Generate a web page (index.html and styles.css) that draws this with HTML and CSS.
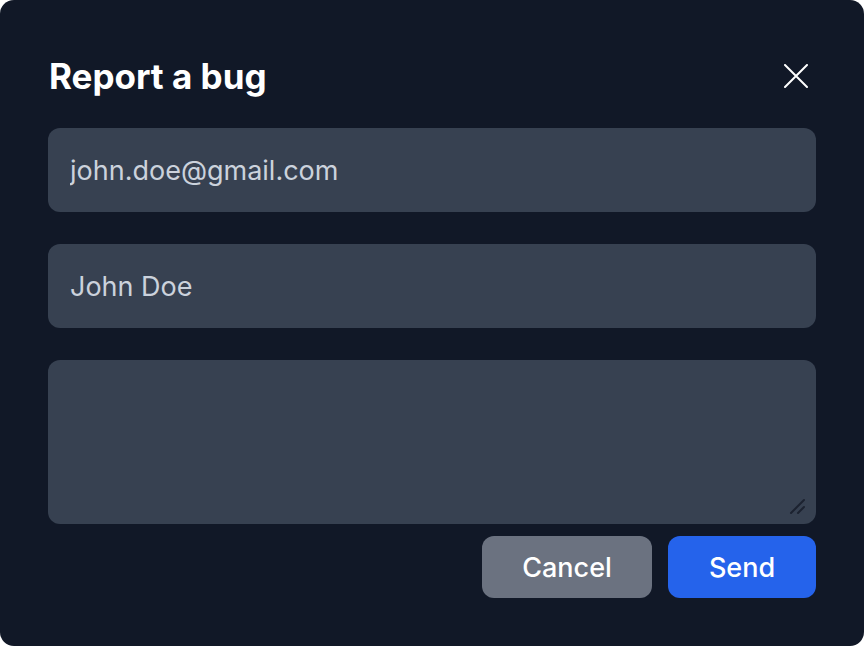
FILE: index.html
```html
<!DOCTYPE html>
<html lang="en">

<head>
    <meta charset="UTF-8">
    <title>Report a bug</title>
    <link rel="stylesheet" href="styles.css">
</head>

<body>
    <div class="dialog">
        <div class="dialog_head">
            <h1 class="dialog_title">Report a bug</h1>
            <button class="dialog_close" type="button">
                <svg width="24" height="24" viewBox="0 0 24 24" fill="none" stroke="#fff" stroke-width="2" stroke-linecap="round">
                    <path d="M1 1L23 23M23 1L1 23"></path>
                </svg>
            </button>
        </div>
        <form class="dialog_form">
            <input class="field" type="text" value="john.doe@gmail.com">
            <input class="field" type="text" value="John Doe">
            <div class="area_wrap">
                <textarea class="field field_area"></textarea>
                <svg class="grip" width="20" height="20" viewBox="0 0 20 20" fill="none" stroke="#1c2230" stroke-width="2" stroke-linecap="round">
                    <path d="M3 17L16 4M10 17L16 11"></path>
                </svg>
            </div>
            <div class="actions">
                <button class="btn btn_cancel" type="button">Cancel</button>
                <button class="btn btn_send" type="button">Send</button>
            </div>
        </form>
    </div>
</body>

</html>
```

FILE: styles.css
```css
html,body,div,h1,form,input,textarea,button {
    padding: 0;
    margin: 0;
    box-sizing: border-box;
}
body {
    background-color: #fff;
    font-family: Inter, "Noto Sans", sans-serif;
}
.dialog {
    width: 864px;
    height: 646px;
    background-color: #111827;
    border-radius: 14px;
    padding: 0 48px 48px;
    display: flex;
    flex-direction: column;
}
.dialog_head {
    height: 128px;
    display: flex;
    align-items: center;
    justify-content: space-between;
    padding-top: 24px;
}
.dialog_title {
    color: #fff;
    font-size: 35px;
    font-weight: 700;
    line-height: 40px;
    margin-left: 1px;
}
.dialog_close {
    width: 24px;
    height: 24px;
    background: none;
    border: none;
    margin-right: 8px;
}
.dialog_close svg {
    display: block;
}
.dialog_form {
    display: flex;
    flex-direction: column;
}
.field {
    width: 100%;
    height: 84px;
    border: none;
    border-radius: 12px;
    background-color: #374151;
    color: #cbd2dc;
    font-family: Inter, "Noto Sans", sans-serif;
    font-size: 27px;
    padding: 0 22px;
    margin-bottom: 32px;
    outline: none;
}
.area_wrap {
    position: relative;
    margin-bottom: 12px;
}
.field_area {
    display: block;
    height: 164px;
    margin-bottom: 0;
    padding: 20px 22px;
    resize: none;
}
.grip {
    position: absolute;
    right: 8px;
    bottom: 8px;
}
.actions {
    display: flex;
    justify-content: flex-end;
    gap: 16px;
}
.btn {
    height: 62px;
    border: none;
    border-radius: 12px;
    color: #fff;
    font-family: Inter, "Noto Sans", sans-serif;
    font-size: 27px;
    font-weight: 500;
}
.btn_cancel {
    width: 170px;
    background-color: #6b7280;
}
.btn_send {
    width: 148px;
    background-color: #2563eb;
}
```
